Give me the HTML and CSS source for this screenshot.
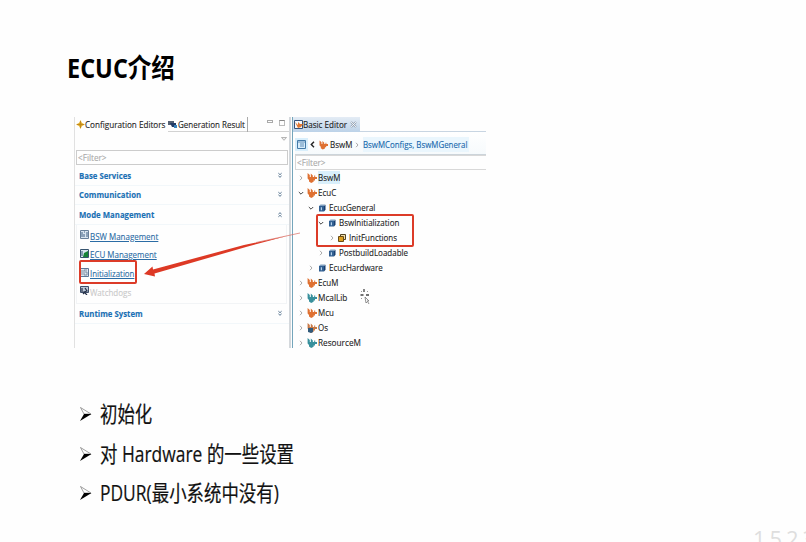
FILE: index.html
```html
<!DOCTYPE html>
<html lang="zh">
<head>
<meta charset="utf-8">
<title>ECUC介绍</title>
<link rel="stylesheet" href="styles.css">
</head>
<body>
<svg width="0" height="0" class="defs">
  <symbol id="fox" viewBox="0 0 10 10"><path d="M.6 0 2.8 2v2h1V.6L5.8 2.6V4h1.4V2.5h1V4H10v2H8V7.400H6.600v1.4L4.2 10 2 8.6V7L.6 5.5z"/></symbol>
  <symbol id="cube" viewBox="0 0 8 8"><path fill="#7f9fc0" d="M1 2 2.5.5h5L6 2z"/><path fill="#315f92" d="M1 2h5v5.5H1z"/><path fill="#183f70" d="M6 2 7.5.8v5L6 7.5z"/><path fill="#b7d2e8" d="M2.8 3.2H4v3H2.8z"/></symbol>
  <symbol id="right" viewBox="0 0 6 6"><path d="M2 .8 4 3 2 5.2" fill="none" stroke="#aaa"/></symbol>
  <symbol id="down" viewBox="0 0 6 6"><path d="M.8 2 3 4.2 5.2 2" fill="none" stroke="#444"/></symbol>
  <symbol id="more" viewBox="0 0 6 7"><path d="M1.4 1.2 3 2.7 4.6 1.2M1.4 3.8 3 5.3 4.6 3.8" fill="none" stroke="#54728e"/></symbol>
  <symbol id="bullet" viewBox="0 0 13 16"><path d="M1.5 1.5 12 8H5z" fill="#fff" stroke="#777" stroke-width=".7"/><path d="M5 8h7.5L1 15z" fill="#000"/></symbol>
</svg>
<main class="slide">
  <h1><span class="t title">ECUC介绍</span></h1>
  <section class="shot">
    <div class="left">
      <div class="tabs">
        <span class="on"><svg class="i9" viewBox="0 0 9 9"><path d="M4.5 0 5.9 3.1 9 4.5 5.9 5.9 4.5 9 3.1 5.9 0 4.5 3.1 3.1z" fill="#e3aa20"/><path d="M4.5 1v7M1 4.5h7" stroke="#c18a1c"/></svg>
        <span class="tab w80"><span class="t s-conf">Configuration Editors</span></span></span>
        <span class="rest"><svg class="i9 gen" viewBox="0 0 9 9"><path fill="#536174" d="M0 1h6v4H0z"/><path fill="#203b67" d="M2 3h6v4H4z"/><path fill="#3984bd" d="M6 5h3v3H6z"/></svg>
        <span class="tab w67"><span class="t s-gen">Generation Result</span></span>
        <i class="mini"></i><i class="maxi"></i></span>
      </div>
      <div class="tool"><svg viewBox="0 0 6 4"><path d="M.5.5h5L3 3.3z" fill="#eee" stroke="#999" stroke-width=".7"/></svg></div>
      <div class="filter"><span class="t s-filter">&lt;Filter&gt;</span></div>
      <div class="sec"><span class="t s-base">Base Services</span><svg><use href="#more"/></svg></div>
      <div class="sec"><span class="t s-comm">Communication</span><svg><use href="#more"/></svg></div>
      <div class="sec"><span class="t s-mode">Mode Management</span><svg class="up"><use href="#more"/></svg></div>
      <div class="links">
        <div class="link"><svg viewBox="0 0 9 9"><path fill="#d9e5f0" stroke="#68809a" d="M.5.5h8v8h-8z"/><path d="M2 2v5M4 4v3M4 2h1M7 2v5" stroke="#3e5f82"/></svg><span class="t s-bsw">BSW Management</span></div>
        <div class="link"><svg viewBox="0 0 9 9"><path fill="#d9e5f0" stroke="#36536e" d="M.5.5h8v8h-8z"/><path d="M2 2v5" stroke="#315275"/><path d="M4 4 8 2v6H3z" fill="#168338"/></svg><span class="t s-ecu">ECU Management</span></div>
        <div class="link"><svg viewBox="0 0 9 9"><path fill="#dbe5f0" stroke="#5c7697" d="M.5.5h8v8h-8z"/><path d="M2 2v5M7 2H4v5h3V4H5" fill="none" stroke="#6b7c91" stroke-width=".8"/></svg><span class="t s-init">Initialization</span></div>
        <div class="link off"><svg viewBox="0 0 9 9"><path fill="#bac7d8" stroke="#3e4f6b" d="M.5.5h8v6h-8z"/><path d="M2 2v4M5 2l2 3-3 1 3 3M3 8l2-2" fill="none" stroke="#252f47" stroke-width="1.2"/></svg><span class="t s-watch">Watchdogs</span></div>
      </div>
      <div class="sec run"><span class="t s-run">Runtime System</span><svg><use href="#more"/></svg></div>
    </div>
    <div class="right">
      <div class="rtabs"><div class="rtab"><svg class="i9" viewBox="0 0 9 9"><path fill="#f4f7fb" stroke="#34527c" d="M.5.5h8v8h-8z"/><path d="M1 2 4 5V2l2 2h3L7 7 4 8z" fill="#e07731"/></svg><span class="t s-basic">Basic Editor</span><svg class="close" viewBox="0 0 7 7"><path d="m1 1 5 5M6 1 1 6" stroke="#98a5b6" stroke-width="2"/><path d="m1 1 5 5M6 1 1 6" stroke="#fff" stroke-width=".8"/></svg></div></div>
      <div class="crumb">
        <span class="home"><svg viewBox="0 0 9 9"><path fill="#d6ecfa" stroke="#447aa8" d="M.5.5h8v8h-8z"/><path d="M1 2h7M3 4h4M3 6h4" stroke="#447aa8" stroke-width=".8"/></svg></span>
        <svg class="back" viewBox="0 0 5 7"><path d="M4 .8 1.3 3.5 4 6.2" fill="none" stroke="#222" stroke-width="1.4"/></svg>
        <svg class="fox orange"><use href="#fox"/></svg><span class="c1"><span class="t s-tree">BswM</span></span>
        <svg class="sep"><use href="#right"/></svg><span class="c2"><span class="t s-c2">BswMConfigs, BswMGeneral</span></span>
      </div>
      <div class="rfilter"><span class="t s-filter">&lt;Filter&gt;</span></div>
      <div class="tree">
        <div class="row"><svg class="tw"><use href="#right"/></svg><svg class="fox orange"><use href="#fox"/></svg><span class="sel"><span class="t">BswM</span></span></div>
        <div class="row"><svg class="tw"><use href="#down"/></svg><svg class="fox orange"><use href="#fox"/></svg><span class="t">EcuC</span></div>
        <div class="row l1"><svg class="tw"><use href="#down"/></svg><svg class="cube"><use href="#cube"/></svg><span class="t">EcucGeneral</span></div>
        <div class="row l2"><svg class="tw"><use href="#down"/></svg><svg class="cube"><use href="#cube"/></svg><span class="t">BswInitialization</span></div>
        <div class="row l3"><svg class="tw"><use href="#right"/></svg><svg class="cube" viewBox="0 0 8 8"><path d="M2.5.5h5v5h-5z" fill="#efdfad" stroke="#514324"/><path d="M.5 2.5h5v5h-5z" fill="#dca021" stroke="#684a16"/></svg><span class="t">InitFunctions</span></div>
        <div class="row l2"><svg class="tw"><use href="#right"/></svg><svg class="cube"><use href="#cube"/></svg><span class="t">PostbuildLoadable</span></div>
        <div class="row l1"><svg class="tw"><use href="#right"/></svg><svg class="cube"><use href="#cube"/></svg><span class="t">EcucHardware</span></div>
        <div class="row"><svg class="tw"><use href="#right"/></svg><svg class="fox orange"><use href="#fox"/></svg><span class="t">EcuM</span></div>
        <div class="row"><svg class="tw"><use href="#right"/></svg><svg class="fox teal"><use href="#fox"/></svg><span class="t wide">McalLib</span></div>
        <div class="row"><svg class="tw"><use href="#right"/></svg><svg class="fox orange"><use href="#fox"/></svg><span class="t">Mcu</span></div>
        <div class="row"><svg class="tw"><use href="#right"/></svg><svg class="fox mixed" viewBox="0 0 10 10"><use href="#fox"/><path d="M1 5h5v4l-2 1-3-1z" fill="#315a7a"/></svg><span class="t">Os</span></div>
        <div class="row"><svg class="tw"><use href="#right"/></svg><svg class="fox teal"><use href="#fox"/></svg><span class="t wide">ResourceM</span></div>
      </div>
    </div>
    <svg class="marks" viewBox="0 0 412 231">
      <g fill="none" stroke="#dc3b28" stroke-width="2"><rect x="6" y="144" width="56" height="22" rx="1"/><rect x="243" y="98" width="96" height="31" rx="1"/></g>
      <path d="M213 119 170 128 79 152.500 78.500 149.500 70 157 81 159.500 80.500 156.500 172 130z" fill="#dd3925"/>
      <path d="m182 125.500 44-9.500" stroke="#d8695f" stroke-width=".7"/>
      <g fill="none" stroke="#444"><path d="M290 172v3M286.500 178h3M292 178h3" stroke-width="1.3"/><path d="m291 180 1 6 1.500-1.500 1.500 2.500M291 180l4 4h-2" stroke="#777" stroke-width=".8"/><path d="m287 174 1 1M294 174l-1 1M287 182l1-1" stroke="#999"/></g>
    </svg>
  </section>
  <ul>
    <li><svg><use href="#bullet"/></svg><span class="t s-b1">初始化</span></li>
    <li><svg><use href="#bullet"/></svg><span class="t s-b2">对 Hardware 的一些设置</span></li>
    <li><svg><use href="#bullet"/></svg><span class="t s-b3">PDUR(最小系统中没有)</span></li>
  </ul>
  <div class="mark">1523</div>
</main>
</body>
</html>
```
FILE: styles.css
```css
* { box-sizing: border-box; }
body { margin: 0; background: #fefefe; color: #111; font-family: "Open Sans", "Noto Sans CJK SC", sans-serif; }
svg { display: block; flex: none; }
.defs { position: absolute; }
.slide { position: relative; width: 806px; height: 542px; overflow: hidden; padding: 48px 0 0 67px; }
.t { display: inline-block; white-space: nowrap; transform-origin: 0 50%; flex: none; }
h1 { margin: 0; height: 69px; font-size: 27px; line-height: 40px; font-weight: 700; color: #000; }
.title { transform: scaleX(.87); }
.shot { position: relative; display: flex; width: 412px; height: 231px; margin-left: 7px; font-size: 9.5px; line-height: 15px; color: #222; -webkit-text-stroke: .12px; }
.left { flex: none; width: 217px; height: 231px; border-left: 1px solid #e1e1e1; border-right: 2px solid #d4d8dc; }
.tabs { display: flex; height: 15px; }
.on, .rest { display: flex; align-items: center; height: 15px; }
.on { width: 93px; padding-left: 1px; }
.rest { flex: 1; border-bottom: 1px solid #d2d2d2; }
.i9 { width: 9px; height: 9px; }
.tab { display: flex; height: 15px; }
.w80 { width: 82px; }
.w67 { width: 71px; padding-left: 1px; border-right: 1px solid #aaa; }
.mini { width: 6px; height: 3px; margin: -5px 0 0 19px; border: 1px solid #aaa; }
.maxi { width: 6px; height: 6px; margin: -3px 0 0 6px; border: 1px solid #bbb; border-top-color: #888; }
.tool { display: flex; justify-content: flex-end; height: 18px; padding: 5px 2px 0 0; }
.tool svg { width: 6px; height: 4px; }
.filter { display: flex; align-items: center; height: 15px; margin: 0 1px 1px 1px; padding-left: 1px; border: 1px solid #ccc; color: #aaa; }
.sec { display: flex; align-items: center; justify-content: space-between; height: 19.6px; padding: 0 6px 0 4px; color: #1a70b4; font-weight: 700; border-bottom: 1px solid #f2f7fa; }
.sec svg { width: 6px; height: 7px; }
.sec svg.up { transform: scaleY(-1); }
.links { height: 79.5px; padding: 2px 0 0 3px; margin: 0 2px 0 1px; border: 1px solid #f2f4f6; border-top: 0; }
.link { display: flex; align-items: center; height: 18.7px; color: #2b6ca5; }
.link svg { width: 9px; height: 9px; margin: -3px 1px 0 0; }
.link .t { text-decoration: underline; text-underline-offset: 1px; transform: scaleX(.84); }
.link .s-init { transform: scaleX(.825); }
.link.off { color: #c9c9c9; }
.off .t { text-decoration: none; }
.right { flex: none; width: 194px; height: 231px; margin-left: 1px; border-left: 1px solid #74a5bb; }
.rtabs { height: 15px; border-bottom: 1px solid #c8d5e2; }
.rtab { position: relative; display: flex; align-items: center; width: 67px; height: 15px; padding-left: 1px; background: linear-gradient(#e4ecf5, #bcd2e8); }
.close { position: absolute; left: 57px; top: 4px; width: 7px; height: 7px; }
.crumb { display: flex; align-items: center; height: 23px; padding-top: 3px; margin-left: 2px; background: linear-gradient(#fff, #f6fafc); border-bottom: 1px solid #ccd4da; }
.home { display: grid; place-items: center; width: 13px; height: 13px; background: #d9effc; }
.home svg { width: 9px; height: 9px; }
.back { width: 5px; height: 7px; margin: 0 4px 0 2px; }
.fox { width: 9px; height: 10px; }
.orange { fill: #df7132; }
.teal { fill: #38909c; }
.mixed { fill: #c87845; }
.c1 { width: 24px; margin-left: 2px; }
.sep { width: 6px; height: 6px; margin-right: 3px; }
.c2 { width: 106px; color: #1767ac; background: #eaf6fd; height: 15px; }
.rfilter { display: flex; align-items: center; height: 15px; margin-left: 2px; border: solid #d8d8d8; border-width: 1px 0 1px 1px; padding-left: 1px; color: #aaa; }
.tree { margin-left: 5px; }
.tree .t, .s-tree { transform: scaleX(.84); }
.tree .wide { transform: scaleX(.865); }
.row { display: flex; align-items: center; height: 15px; }
.tw { width: 6px; height: 6px; margin-right: 3px; }
.row .fox { width: 10px; margin-right: 1px; }
.l1 { padding-left: 10px; }
.l2 { padding-left: 20px; }
.l3 { padding-left: 31px; }
.cube { width: 8px; height: 8px; margin: 0 3px 0 1px; }
.l3 .cube { margin-left: 0; }
.sel { width: 22px; height: 13px; line-height: 13px; background: #d9effb; }
.marks { position: absolute; inset: 0; width: 412px; height: 231px; }
ul { list-style: none; margin: 46px 0 0 13px; padding: 0; font-size: 22px; color: #111; -webkit-text-stroke: .2px; }
li { display: flex; align-items: center; height: 39.5px; line-height: 39px; }
li svg { width: 13px; height: 16px; margin: 1px 8px 0 -1px; }
li .t { transform: scaleX(.792); }
.s-conf { transform: scaleX(.855); }
.s-gen { transform: scaleX(.84); }
.s-basic { transform: scaleX(.85); }
.s-filter { transform: scaleX(.86); }
.s-base, .s-comm, .s-mode, .s-run { transform: scaleX(.82); }
.s-c2 { transform: scaleX(.83); }
.mark { position: absolute; left: 753px; top: 525px; font-size: 22px; line-height: 26px; letter-spacing: 3.9px; color: #dedede; white-space: nowrap; }
```
